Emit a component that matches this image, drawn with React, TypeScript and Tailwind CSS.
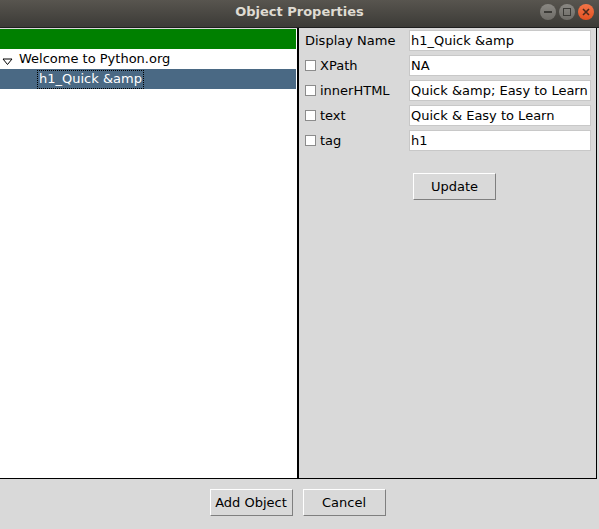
import React from 'react'

const font = { fontFamily: '"DejaVu Sans", sans-serif' }

const rows = [
  { label: 'XPath', value: 'NA' },
  { label: 'innerHTML', value: 'Quick &amp; Easy to Learn' },
  { label: 'text', value: 'Quick & Easy to Learn' },
  { label: 'tag', value: 'h1' },
]

// raised tk-style button
const TkButton = ({ label }: { label: string }) => (
  <button className="w-[83px] h-[27px] bg-[#d9d9d9] border border-t-white border-l-white border-r-[#7f7f7f] border-b-[#7f7f7f] text-[13px] text-black leading-none">
    {label}
  </button>
)

const App = () => {
  return (
    <div className="w-[599px] h-[529px] flex flex-col bg-[#d9d9d9] overflow-hidden text-[13px] text-black" style={font}>
      {/* title bar */}
      <div className="relative h-[28px] flex items-center justify-center bg-gradient-to-b from-[#58554f] to-[#3c3b37] border-b border-[#1f1f1f]">
        <span className="text-[13px] font-bold text-[#dfdbd2] -mt-[4px]">Object Properties</span>
        <div className="absolute right-[5px] top-[4px] flex items-center gap-[3px]">
          <div className="w-[16px] h-[16px] rounded-full bg-gradient-to-b from-[#8a8883] to-[#6e6c67] flex items-center justify-center">
            <div className="w-[8px] h-[2px] bg-[#3c3b37]" />
          </div>
          <div className="w-[16px] h-[16px] rounded-full bg-gradient-to-b from-[#8a8883] to-[#6e6c67] flex items-center justify-center">
            <div className="w-[8px] h-[8px] border-[1.5px] border-[#3c3b37]" />
          </div>
          <div className="w-[16px] h-[16px] rounded-full bg-gradient-to-b from-[#f37548] to-[#e1501f] flex items-center justify-center">
            <svg width="8" height="8" viewBox="0 0 8 8">
              <path d="M1 1 L7 7 M7 1 L1 7" stroke="#4a2a1c" strokeWidth="1.6" />
            </svg>
          </div>
        </div>
      </div>

      {/* main panes */}
      <div className="flex h-[451px] pr-[2px]">
        {/* tree */}
        <div className="w-[297px] bg-white border-t border-[#d9d9d9] border-b border-b-black pr-[1px]">
          <div className="h-[20px] bg-[#008000]" />
          <div className="h-[20px] flex items-center">
            <svg width="12" height="8" viewBox="0 0 12 8" className="ml-[2px] mt-[5px]">
              <polygon points="1,1 10,1 5.5,6.5" fill="none" stroke="#000" strokeWidth="1" />
            </svg>
            <span className="ml-[5px]">Welcome to Python.org</span>
          </div>
          <div className="h-[20px] bg-[#4a6984] flex items-center">
            <span className="ml-[37px] h-[19px] px-[1px] flex items-center border border-dotted border-black text-white">
              h1_Quick &amp;amp
            </span>
          </div>
        </div>

        {/* properties */}
        <div className="flex-1 border-l-[2px] border-r border-b border-black flex flex-col pl-[6px] pr-[5px] pt-[2px]">
          <div className="flex flex-col gap-[4px]">
            <div className="flex items-center h-[21px]">
              <span className="w-[104px]">Display Name</span>
              <div className="flex-1 h-[21px] bg-white border border-[#c8c8c8] pl-[1px] flex items-center">h1_Quick &amp;amp</div>
            </div>
            {rows.map((r) => (
              <div key={r.label} className="flex items-center h-[21px]">
                <div className="w-[104px] flex items-center">
                  <div className="w-[11px] h-[11px] bg-white border border-[#8c8c8c]" />
                  <span className="ml-[4px]">{r.label}</span>
                </div>
                <div className="flex-1 h-[21px] bg-white border border-[#c8c8c8] pl-[1px] flex items-center whitespace-nowrap overflow-hidden">
                  {r.value}
                </div>
              </div>
            ))}
          </div>
          <div className="flex pl-[108px] mt-[22px]">
            <TkButton label="Update" />
          </div>
        </div>
      </div>

      {/* bottom buttons */}
      <div className="flex justify-center gap-[10px] pt-[10px] pr-[4px]">
        <TkButton label="Add Object" />
        <TkButton label="Cancel" />
      </div>
    </div>
  )
}

export default App
